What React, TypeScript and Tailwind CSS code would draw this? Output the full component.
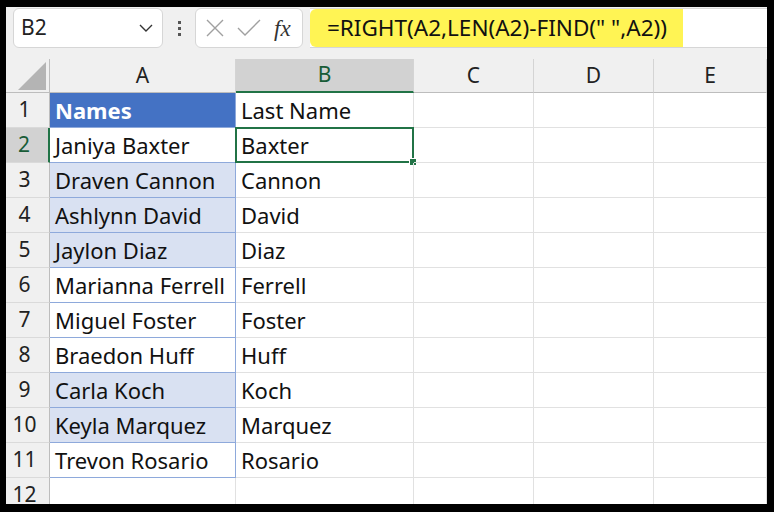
import React from "react";

const names = [
  "Janiya Baxter",
  "Draven Cannon",
  "Ashlynn David",
  "Jaylon Diaz",
  "Marianna Ferrell",
  "Miguel Foster",
  "Braedon Huff",
  "Carla Koch",
  "Keyla Marquez",
  "Trevon Rosario",
];

// rows that carry the light blue fill in column A
const shaded = [3, 4, 5, 9, 10];

const font = { fontFamily: '"Noto Sans", "Open Sans", sans-serif' };

function ColHeader({ label, selected }: { label: string; selected?: boolean }) {
  return (
    <div
      className={`flex items-center justify-center text-[21px] ${
        selected
          ? "bg-[#d2d2d2] text-[#185c37] border-b-2 border-b-[#217346]"
          : "bg-[#f0f0f0] text-[#222] border-b border-b-[#bdbdbd]"
      } border-r border-r-[#d4d4d4]`}
    >
      {label}
    </div>
  );
}

function RowHeader({ n, selected }: { n: number; selected?: boolean }) {
  return (
    <div
      className={`flex items-center justify-center pr-[6px] text-[21px] border-b border-b-[#dadada] ${
        selected
          ? "bg-[#d2d2d2] text-[#185c37] border-r-2 border-r-[#217346]"
          : "bg-[#f0f0f0] text-[#222] border-r border-r-[#bdbdbd]"
      }`}
    >
      {n}
    </div>
  );
}

function Cell({
  children,
  className = "",
}: {
  children?: React.ReactNode;
  className?: string;
}) {
  return (
    <div
      className={`relative flex items-center pl-[5px] pt-[1px] text-[22px] text-[#111] whitespace-nowrap overflow-visible border-r border-b ${className}`}
    >
      {children}
    </div>
  );
}

export default function App() {
  const rows = Array.from({ length: 12 }, (_, i) => i + 1);

  return (
    <div
      className="w-[774px] h-[512px] bg-black pt-[7px] pl-[6px] pr-[7px] pb-[8px]"
      style={font}
    >
      <div className="w-full h-full bg-white overflow-hidden flex flex-col">
        {/* formula bar */}
        <div className="h-[52px] shrink-0 bg-[#f0f0f0] flex items-start pt-[1px] pl-[7px]">
          <div className="w-[150px] h-[40px] bg-white border border-[#d6d6d6] rounded-[6px] flex items-center justify-between pl-[7px] pr-[8px]">
            <span className="text-[21px] text-[#222]">B2</span>
            <svg width="16" height="10" viewBox="0 0 16 10">
              <path d="M2 2 L8 8 L14 2" fill="none" stroke="#333" strokeWidth="1.4" />
            </svg>
          </div>
          <div className="w-[32px] h-[40px] flex flex-col items-center justify-center gap-[3px]">
            <span className="w-[3px] h-[3px] bg-[#555]" />
            <span className="w-[3px] h-[3px] bg-[#555]" />
            <span className="w-[3px] h-[3px] bg-[#555]" />
          </div>
          <div className="w-[108px] h-[40px] bg-white border border-[#d6d6d6] rounded-[6px] flex items-center pl-[9px]">
            <svg width="20" height="20" viewBox="0 0 20 20">
              <path d="M2 2 L18 18 M18 2 L2 18" stroke="#a0a0a0" strokeWidth="1.4" />
            </svg>
            <svg width="26" height="20" viewBox="0 0 26 20" className="ml-[11px]">
              <path d="M2 10 L9 17 L24 2" fill="none" stroke="#a0a0a0" strokeWidth="1.4" />
            </svg>
            <span
              className="ml-[12px] text-[23px] italic text-[#333] leading-none"
              style={{ fontFamily: '"Liberation Serif", serif' }}
            >
              fx
            </span>
          </div>
          <div className="ml-[7px] flex-1 h-[40px] bg-white border-y border-[#d6d6d6] flex">
            <div className="w-[373px] h-full bg-[#fff454] rounded-l-[6px] flex items-center pl-[17px] text-[22.5px] text-[#111] whitespace-nowrap">
              =RIGHT(A2,LEN(A2)-FIND(" ",A2))
            </div>
          </div>
        </div>

        {/* sheet */}
        <div className="grid grid-cols-[44px_186px_178px_120px_120px_1fr] grid-rows-[34px_repeat(12,35px)]">
          <div className="bg-[#f0f0f0] border-r border-r-[#bdbdbd] border-b border-b-[#bdbdbd] flex items-end justify-end pr-[3px] pb-[2px]">
            <svg width="28" height="28" viewBox="0 0 28 28">
              <path d="M28 0 L28 28 L0 28 Z" fill="#b4b4b4" />
            </svg>
          </div>
          <ColHeader label="A" />
          <ColHeader label="B" selected />
          <ColHeader label="C" />
          <ColHeader label="D" />
          <ColHeader label="E" />

          {rows.map((r) => {
            const name = r >= 2 && r <= 11 ? names[r - 2] : "";
            const last = name ? name.split(" ").slice(1).join(" ") : "";
            const tableCell = r >= 2 && r <= 11;
            return (
              <React.Fragment key={r}>
                <RowHeader n={r} selected={r === 2} />
                {r === 1 ? (
                  <Cell className="bg-[#4472c4] border-r-[#8ea9db] border-b-[#8ea9db]">
                    <span className="font-bold text-white">Names</span>
                  </Cell>
                ) : (
                  <Cell
                    className={
                      tableCell
                        ? `${shaded.includes(r) ? "bg-[#d9e1f2]" : "bg-white"} border-r-[#8ea9db] border-b-[#8ea9db]`
                        : "border-r-[#e1e1e1] border-b-[#e1e1e1]"
                    }
                  >
                    {name}
                  </Cell>
                )}
                <Cell className="border-r-[#e1e1e1] border-b-[#e1e1e1]">
                  {r === 1 ? "Last Name" : last}
                  {r === 2 && (
                    <>
                      <div className="absolute -left-[1px] -top-[1px] -right-[1px] -bottom-[1px] border-2 border-[#217346]" />
                      <div className="absolute -right-[4px] -bottom-[4px] w-[6px] h-[6px] bg-[#217346] border border-white box-content" />
                    </>
                  )}
                </Cell>
                <Cell className="border-r-[#e1e1e1] border-b-[#e1e1e1]" />
                <Cell className="border-r-[#e1e1e1] border-b-[#e1e1e1]" />
                <Cell className="border-r-[#e1e1e1] border-b-[#e1e1e1]" />
              </React.Fragment>
            );
          })}
        </div>
      </div>
    </div>
  );
}
